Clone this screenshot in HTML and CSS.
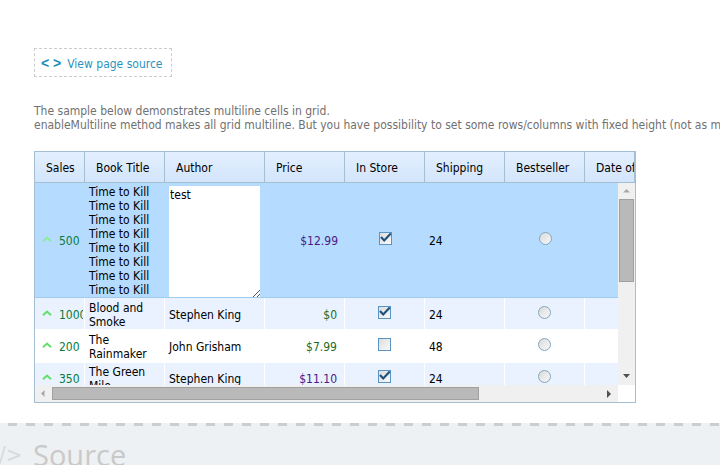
FILE: index.html
```html
<!DOCTYPE html>
<html>
<head>
<meta charset="utf-8">
<title>Multiline cells</title>
<link rel="stylesheet" href="styles.css">
</head>
<body>
<div class="page">
  <a class="source-link"><span class="brackets">&lt; &gt;</span><span>View page source</span></a>
  <p class="intro">The sample below demonstrates multiline cells in grid.<br>enableMultiline method makes all grid multiline. But you have possibility to set some rows/columns with fixed height (not as multiline).</p>
  <div class="grid">
    <div class="head">
      <div class="hc c-sales">Sales</div>
      <div class="hc c-title">Book Title</div>
      <div class="hc c-author">Author</div>
      <div class="hc c-price">Price</div>
      <div class="hc c-store">In Store</div>
      <div class="hc c-ship">Shipping</div>
      <div class="hc c-best">Bestseller</div>
      <div class="hc c-date">Date of</div>
    </div>
    <div class="viewport">
      <div class="rows">
        <div class="row selected">
          <div class="td c-sales sales"><svg class="up" width="10" height="6" viewBox="0 0 10 6"><path d="M1 5.200L5 1.500L9 5.200" fill="none" stroke="#8ceb9a" stroke-width="2"/></svg><span class="num">500</span></div>
          <div class="td c-title title">Time to Kill<br>Time to Kill<br>Time to Kill<br>Time to Kill<br>Time to Kill<br>Time to Kill<br>Time to Kill<br>Time to Kill</div>
          <div class="td c-author editor-cell"><div class="editor">test<svg class="grip" width="8" height="8" viewBox="0 0 8 8"><path d="M1 8L8 1M5 8L8 5" stroke="#555" stroke-width="1"/></svg></div></div>
          <div class="td c-price price"><span class="cost">$12.99</span></div>
          <div class="td c-store center"><svg class="check" width="13" height="13" viewBox="0 0 13 13"><use href="#checked"/></svg></div>
          <div class="td c-ship">24</div>
          <div class="td c-best center"><span class="radio"></span></div>
          <div class="td c-date"></div>
        </div>
        <div class="row even r2">
          <div class="td c-sales sales"><svg class="up" width="10" height="6" viewBox="0 0 10 6"><path d="M1 5.200L5 1.500L9 5.200" fill="none" stroke="#62e06a" stroke-width="2"/></svg><span class="num">1000</span></div>
          <div class="td c-title title">Blood and Smoke</div>
          <div class="td c-author">Stephen King</div>
          <div class="td c-price price"><span class="cost green">$0</span></div>
          <div class="td c-store center"><svg class="check" width="13" height="13" viewBox="0 0 13 13"><use href="#checked"/></svg></div>
          <div class="td c-ship">24</div>
          <div class="td c-best center"><span class="radio"></span></div>
          <div class="td c-date"></div>
        </div>
        <div class="row r3">
          <div class="td c-sales sales"><svg class="up" width="10" height="6" viewBox="0 0 10 6"><path d="M1 5.200L5 1.500L9 5.200" fill="none" stroke="#62e06a" stroke-width="2"/></svg><span class="num">200</span></div>
          <div class="td c-title title">The Rainmaker</div>
          <div class="td c-author">John Grisham</div>
          <div class="td c-price price"><span class="cost green">$7.99</span></div>
          <div class="td c-store center"><svg class="check" width="13" height="13" viewBox="0 0 13 13"><use href="#unchecked"/></svg></div>
          <div class="td c-ship">48</div>
          <div class="td c-best center"><span class="radio"></span></div>
          <div class="td c-date"></div>
        </div>
        <div class="row even r4">
          <div class="td c-sales sales"><svg class="up" width="10" height="6" viewBox="0 0 10 6"><path d="M1 5.200L5 1.500L9 5.200" fill="none" stroke="#62e06a" stroke-width="2"/></svg><span class="num">350</span></div>
          <div class="td c-title title">The Green Mile</div>
          <div class="td c-author">Stephen King</div>
          <div class="td c-price price"><span class="cost">$11.10</span></div>
          <div class="td c-store center"><svg class="check" width="13" height="13" viewBox="0 0 13 13"><use href="#checked"/></svg></div>
          <div class="td c-ship">24</div>
          <div class="td c-best center"><span class="radio"></span></div>
          <div class="td c-date"></div>
        </div>
      </div>
      <div class="vbar">
        <svg class="arrow" width="17" height="14" viewBox="0 0 17 14"><path d="M5 9.500L8.500 6L12 9.500Z" fill="#a9a9a9"/></svg>
        <div class="vtrack"><div class="vthumb"></div></div>
        <svg class="arrow" width="17" height="14" viewBox="0 0 17 14"><path d="M5 3L8.500 7L12 3Z" fill="#505050"/></svg>
      </div>
    </div>
    <div class="hbar">
      <svg class="arrow" width="17" height="17" viewBox="0 0 17 17"><path d="M9.500 5L6 8.500L9.500 12Z" fill="#a9a9a9"/></svg>
      <div class="htrack"><div class="hthumb"></div></div>
      <svg class="arrow" width="17" height="17" viewBox="0 0 17 17"><path d="M6 5L10 9L6 13Z" fill="#505050"/></svg>
      <div class="corner"></div>
    </div>
  </div>
  <svg class="defs" width="0" height="0">
    <defs>
      <linearGradient id="box" x1="0" y1="0" x2="1" y2="1"><stop offset="0" stop-color="#dcdcdc"/><stop offset="1" stop-color="#fafafa"/></linearGradient>
      <g id="unchecked"><rect x=".5" y=".5" width="12" height="12" fill="url(#box)" stroke="#5a94c4"/></g>
      <g id="checked"><rect x=".5" y=".5" width="12" height="12" fill="url(#box)" stroke="#5a94c4"/><path d="M2 5L5.200 8.500L11.800 1.500" fill="none" stroke="#21527f" stroke-width="2.200"/></g>
    </defs>
  </svg>
</div>
<section class="source-section">
  <span class="tag">/&gt;</span><h2>Source</h2>
</section>
</body>
</html>
```
FILE: styles.css
```css
html, body { margin: 0; padding: 0; height: 465px; overflow: hidden; background: #fff; }
body { font-family: "DejaVu Sans Condensed", "DejaVu Sans", sans-serif; font-size: 12px; color: #000; }
.page { padding: 48px 0 0 34px; height: 375px; }
.defs { position: absolute; }
.source-link { display: flex; width: 130px; height: 25px; border: 1px dashed #ccc; align-items: center; color: #2a93c0; gap: 6px; padding: 2px 0 0 6px; box-sizing: content-box; }
.brackets { font-family: "Liberation Sans", sans-serif; font-weight: bold; font-size: 14px; color: #1b8ab5; margin-top: -2px; }
.intro { margin: 27px 0 0; width: 900px; line-height: 14px; color: #717171; white-space: nowrap; }
.grid { margin-top: 19px; width: 600px; height: 250px; border: 1px solid #a4bed4; background: #fff; display: flex; flex-direction: column; overflow: hidden; }
.head { display: flex; height: 30px; flex: none; background: linear-gradient(#e3efff, #d3e5fb); border-bottom: 1px solid #a4bed4; box-sizing: content-box; }
.hc { height: 30px; line-height: 30px; padding: 1px 0 0 10px; box-sizing: border-box; border-right: 1px solid #a4bed4; border-left: 1px solid #fff0; white-space: nowrap; overflow: hidden; color: #000; }
.c-sales { width: 50px; flex: none; }
.c-title { width: 80px; flex: none; }
.c-author { width: 100px; flex: none; }
.c-price, .c-store, .c-ship, .c-best { width: 80px; flex: none; }
.c-date { width: 50px; flex: none; }
.viewport { display: flex; height: 202px; flex: none; }
.rows { width: 583px; height: 202px; overflow: hidden; flex: none; }
.row { display: flex; background: #fff; }
.row.even { background: #e9f2fe; }
.row.selected { background: #b5dcff; height: 114px; border-bottom: 1px solid #9ecbec; box-sizing: content-box; }
.r2 { height: 31px; }
.r3 { height: 34px; }
.r4 { height: 30px; }
.td { box-sizing: border-box; display: flex; align-items: center; padding: 2px 4px 0; border-right: 1px solid #fff; overflow: hidden; }
.r2 .td { padding-top: 3px; }
.selected .td { border-right: 0; }
.td.title { line-height: 14px; display: block; padding: 2px 4px; overflow: hidden; }
.selected .td.title { padding-top: 2px; }
.r2 .td.title { padding-top: 3px; }
.r3 .td.title { padding-top: 4px; }
.r4 .td.title { padding-top: 2px; }
.sales { gap: 7px; padding-left: 7px; white-space: nowrap; }
.up { flex: none; margin-top: -5px; }
.num { color: #0a7a3c; width: 24px; overflow: hidden; flex: none; }
.td.price { justify-content: flex-end; padding-right: 7px; }
.cost { color: #4b1a87; }
.cost.green { color: #1e6b1e; }
.center { justify-content: center; }
.check { display: block; margin-top: -5px; overflow: visible; }
.radio { display: block; width: 11px; height: 11px; border: 1px solid #7fa6c6; border-radius: 50%; background: linear-gradient(135deg, #dadada, #f8f8f8); margin-top: -5px; }
.td.editor-cell { align-items: stretch; padding: 3px 4px 0; }
.editor { width: 91px; height: 111px; background: #fff; position: relative; padding: 2px 1px; box-sizing: border-box; line-height: 14px; }
.grip { position: absolute; right: 0; bottom: 0; }
.vbar { width: 17px; height: 202px; flex: none; background: #f0f0f0; display: flex; flex-direction: column; }
.arrow { display: block; flex: none; }
.vtrack { flex: 1; padding: 2px 1px 0; }
.vthumb { height: 83px; background: #b9b9b9; border: 1px solid #a0a0a0; box-sizing: border-box; }
.hbar { display: flex; flex: 1; background: #f0f0f0; }
.htrack { flex: 1; padding: 2px 0 0; }
.hthumb { width: 427px; height: 13px; background: #b9b9b9; border: 1px solid #a0a0a0; box-sizing: border-box; }
.corner { width: 17px; background: #fff; flex: none; }
.source-section { height: 42px; background-color: #eef1f4; background-image: repeating-linear-gradient(90deg, #cdcdcd 0 9px, transparent 9px 18px); background-size: 100% 3px; background-repeat: no-repeat; background-position: 8px 0; display: flex; align-items: flex-start; overflow: hidden; box-sizing: border-box; padding-top: 12px; }
.tag { font-size: 22px; line-height: 40px; width: 34px; margin-left: -1px; flex: none; color: #d6dadd; }
h2 { margin: 0; font-weight: normal; font-size: 29px; line-height: 40px; color: #c9c9c9; font-family: "Open Sans", sans-serif; }
```
